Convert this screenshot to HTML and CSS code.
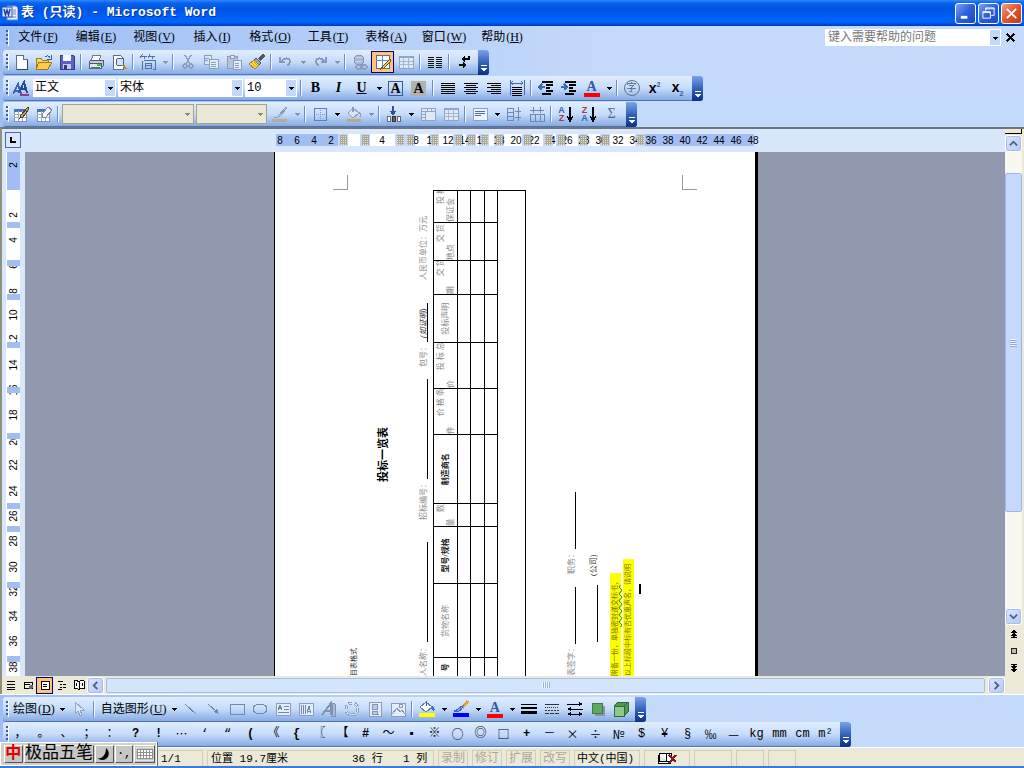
FILE: index.html
```
<!DOCTYPE html>
<html lang="zh-CN">
<head>
  <meta charset="UTF-8">
  <title>表 (只读) - Microsoft Word</title>
  <link rel="stylesheet" href="styles.css">
</head>
<body>

<!-- icon set -->
<svg class="defs" width="0" height="0" aria-hidden="true">
  <symbol id="word" viewBox="0 0 16 16"><path d="M5 1h9l2 2v12H5z" fill="#e8eefa" stroke="#6b86c4"/><path d="M11 5h3M11 7h3M11 9h3M7 12h7" stroke="#6b86c4"/><path d="M0 2h10v10H0z" fill="#dfe8fb" stroke="#2b55b0"/><path d="M2 4l1.500 6L5 5l1.500 5L8 4" fill="none" stroke="#1c46a8" stroke-width="1.500"/></symbol>
  <symbol id="down" viewBox="0 0 8 8"><path d="M2 3h5v1H2zM3 4h3v1H3zM4 5h1v1H4z" fill="currentColor"/></symbol>
  <symbol id="new" viewBox="0 0 16 16"><path d="M3 1h7l4 4v10H3z" fill="#fff" stroke="#5a6b94"/><path d="M10 1v4h4" fill="#cfdcf5" stroke="#5a6b94"/><path d="M14 6v9H4" fill="none" stroke="#2f3f6c"/></symbol>
  <symbol id="open" viewBox="0 0 16 16"><path d="M0 4h5l1 2h6v8H0z" fill="#f7d774" stroke="#a87c1c"/><path d="M3 8h13l-4 7H0z" fill="#ffc94a" stroke="#a8741a"/><path d="M9 3c2-2 4-1 5 1M15 1v4h-4" fill="none" stroke="#3d5f9e"/></symbol>
  <symbol id="save" viewBox="0 0 16 16"><path d="M1 1h13l1 1v13H1z" fill="#5a62c8" stroke="#343a8e"/><path d="M4 1h8v6H4z" fill="#f4f6ff"/><path d="M4 10h8v5H4z" fill="#c9cce8"/><path d="M5 11h3v4H5z" fill="#343a8e"/></symbol>
  <symbol id="print" viewBox="0 0 16 16"><path d="M5 1h8l-2 6H3z" fill="#fff" stroke="#6b7a90"/><path d="M1 8l2-2h12v6l-2 2H1z" fill="#c3cbd8" stroke="#4b5a70"/><path d="M1 9h12v5H1z" fill="#e2e7ee" stroke="#4b5a70"/><path d="M3 13h9v2H3z" fill="#5c6876"/><path d="M9 10h4v2H9z" fill="#3ec04c"/></symbol>
  <symbol id="preview" viewBox="0 0 16 16"><path d="M2 1h7l3 3v11H2z" fill="#fff" stroke="#5a6b94"/><circle cx="9" cy="8" r="4" fill="#cfe4fb" stroke="#50607c"/><path d="M12 11l3 4" stroke="#c09018" stroke-width="2"/></symbol>
  <symbol id="jian" viewBox="0 0 16 16"><path d="M3 0L0 4M2 2h5M4 2l1 3M10 0L8 4M9 2h6M12 2l1 3M2 7v9M4 6h11v9h-2M5 9h6v5H5zM5 11h6" fill="none" stroke="#4f70a6"/></symbol>
  <symbol id="cut" viewBox="0 0 16 16"><path d="M5 1l5 9M11 1l-5 9" stroke="#8d9cb9" stroke-width="1.500"/><circle cx="5" cy="12" r="2" fill="none" stroke="#8d9cb9" stroke-width="1.500"/><circle cx="11" cy="12" r="2" fill="none" stroke="#8d9cb9" stroke-width="1.500"/></symbol>
  <symbol id="copy" viewBox="0 0 16 16"><path d="M1 1h7v9H1z" fill="#d7e3f6" stroke="#8d9cb9"/><path d="M6 5h9v9H6z" fill="#e4edfb" stroke="#8d9cb9"/><path d="M2 4h4M2 6h3M8 8h5M8 10h5M8 12h5" stroke="#8d9cb9"/></symbol>
  <symbol id="paste" viewBox="0 0 16 16"><path d="M1 2h10v12H1z" fill="#b5c3dc" stroke="#8d9cb9"/><path d="M4 1h4v3H4z" fill="#dfe8f6" stroke="#8d9cb9"/><path d="M7 6h8v9H7z" fill="#e4edfb" stroke="#8d9cb9"/><path d="M9 9h4M9 11h4M9 13h4" stroke="#8d9cb9"/></symbol>
  <symbol id="brush" viewBox="0 0 16 16"><path d="M15 1l-5 5" stroke="#4a5568" stroke-width="3"/><path d="M7 4l5 5-2 2-5-5z" fill="#9aa6b8" stroke="#4a5568"/><path d="M5 6l5 5-4 4-6-5z" fill="#ffd94f" stroke="#a8841c"/><path d="M3 9l4 4M5 8l4 4" stroke="#d39e23"/></symbol>
  <symbol id="undo" viewBox="0 0 16 16"><path d="M2 3v5h5M3 8c2-4 8-5 9-1 0 3-2 4-3 5" fill="none" stroke="#8499c4" stroke-width="2"/></symbol>
  <symbol id="redo" viewBox="0 0 16 16"><path d="M14 3v5H9M13 8C11 4 5 3 4 7c0 3 2 4 3 5" fill="none" stroke="#8499c4" stroke-width="2"/></symbol>
  <symbol id="link" viewBox="0 0 16 16"><circle cx="7" cy="6" r="5" fill="#a9b6cf" stroke="#8796b5"/><path d="M4 4c2-2 4 1 6-1M3 7c3 1 4-1 7 1" stroke="#c9d5e8" fill="none"/><rect x="4" y="11" width="6" height="4" rx="2" fill="none" stroke="#8d9cb9" stroke-width="1.500"/><rect x="9" y="11" width="6" height="4" rx="2" fill="none" stroke="#8d9cb9" stroke-width="1.500"/></symbol>
  <symbol id="tables" viewBox="0 0 16 16"><path d="M1 1h13v13H1z" fill="#fff" stroke="#55709f"/><path d="M1 6h13M7 1v13" stroke="#6b8ac0"/><path d="M15 5l-7 7-2 3 3-1 7-7z" fill="#f3c44c" stroke="#6b5420"/><path d="M8 14h6" stroke="#3f9b3c"/></symbol>
  <symbol id="grid" viewBox="0 0 16 16"><path d="M1 2h14v12H1z" fill="#dfe8f6" stroke="#93a3c2"/><path d="M1 3h14" stroke="#93a3c2" stroke-width="2"/><path d="M1 7h14M1 10h14M5 3v11M10 3v11" stroke="#a6b5d0"/></symbol>
  <symbol id="cols" viewBox="0 0 16 16"><path d="M1 3h6M1 5h6M1 7h6M1 9h6M1 11h6M1 13h6M9 3h6M9 5h6M9 7h6M9 9h6M9 11h6M9 13h6" stroke="#111"/></symbol>
  <symbol id="turn" viewBox="0 0 16 16"><path d="M13 2v3H8M3 11h5" fill="none" stroke="#000" stroke-width="1.500"/><path d="M9 2v6L5 5zM7 8v6l4-3z"/></symbol>
  <symbol id="styles" viewBox="0 0 16 16"><path d="M0 14L5 4l3 10M2 11h5" fill="none" stroke="#3566b5" stroke-width="2"/><path d="M6 13l5-11 3 11M8 9h6" fill="none" stroke="#284a9a" stroke-width="2"/><path d="M7 15h9" stroke="#8a3d96" stroke-width="2"/></symbol>
  <symbol id="just" viewBox="0 0 16 16"><path d="M1 3h14M1 5h14M1 7h14M1 9h14M1 11h14M1 13h14" stroke="#000"/></symbol>
  <symbol id="center" viewBox="0 0 16 16"><path d="M1 3h14M3 5h10M1 7h14M3 9h10M1 11h14M3 13h10" stroke="#000"/></symbol>
  <symbol id="right" viewBox="0 0 16 16"><path d="M1 3h14M5 5h10M1 7h14M5 9h10M1 11h14M5 13h10" stroke="#000"/></symbol>
  <symbol id="dist" viewBox="0 0 16 16"><path d="M1 0v15M15 0v15" stroke="#3f68b8"/><path d="M2 3h12M4 1L2 3l2 2M12 1l2 2-2 2" stroke="#3f68b8" fill="none"/><path d="M3 7h10M3 9h10M3 11h10M3 13h10M3 15h10" stroke="#000"/></symbol>
  <symbol id="outdent" viewBox="0 0 16 16"><path d="M4 2h11M8 5h7M8 8h4M8 11h7M4 14h9" stroke="#000" stroke-width="1.500"/><path d="M7 7H1M4 4L1 7l3 3" stroke="#3f68b8" fill="none" stroke-width="1.500"/></symbol>
  <symbol id="indent" viewBox="0 0 16 16"><path d="M4 2h11M8 5h7M8 8h4M8 11h7M4 14h9" stroke="#000" stroke-width="1.500"/><path d="M0 7h6M3 4l3 3-3 3" stroke="#3f68b8" fill="none" stroke-width="1.500"/></symbol>
  <symbol id="drawtbl" viewBox="0 0 16 16"><path d="M1 3h12v12H1z" fill="#fff" stroke="#7c90b8"/><path d="M1 4h12" stroke="#4b71bb" stroke-width="3"/><path d="M1 8h12M1 11h12M5 5v10M9 5v10" stroke="#9fb0d0"/><path d="M15 1l-7 8-1 3 3-1 6-8z" fill="#c9a35a" stroke="#4c3b1c"/></symbol>
  <symbol id="erasetbl" viewBox="0 0 16 16"><path d="M1 3h12v12H1z" fill="#fff" stroke="#7c90b8"/><path d="M1 4h12" stroke="#4b71bb" stroke-width="3"/><path d="M1 8h12M1 11h12M5 5v10M9 5v10" stroke="#9fb0d0"/><path d="M12 1l4 3-6 7H6V8z" fill="#f4f6fa" stroke="#78859c"/></symbol>
  <symbol id="penline" viewBox="0 0 16 16"><path d="M14 1L7 9l-1 2 2-1 7-8z" fill="#c8d3e6" stroke="#8d9cb9"/><path d="M2 11h4" stroke="#8d9cb9"/><path d="M0 14h15" stroke="#b5ac9c" stroke-width="3"/></symbol>
  <symbol id="border" viewBox="0 0 16 16"><path d="M2 2h12v12H2z" fill="none" stroke="#5c7fc0"/><path d="M4 8h9M8 4v9" stroke="#7c9bd2" stroke-dasharray="1 1"/></symbol>
  <symbol id="fill0" viewBox="0 0 16 16"><path d="M7 2l6 5-6 5-5-5z" fill="#dbe4f2" stroke="#8d9cb9"/><path d="M7 6V1M13 7c2 1 2 3 1 4" stroke="#8d9cb9" fill="none" stroke-width="1.500"/><path d="M1 14h14" stroke="#b5ac8c" stroke-width="3"/></symbol>
  <symbol id="instbl" viewBox="0 0 16 16"><path d="M7 0v8M5 5l2 3 2-3" fill="none" stroke="#2f5199" stroke-width="2"/><path d="M1 10h3v5H1z" fill="#fff" stroke="#667"/><path d="M6 10h3v5H6z" fill="#666" stroke="#333"/><path d="M11 10h3v5h-3z" fill="#fff" stroke="#667"/></symbol>
  <symbol id="merge" viewBox="0 0 16 16"><path d="M1 2h14v12H1z" fill="#dfe8f6" stroke="#93a3c2"/><path d="M1 5h14M5 5v9M1 8h4M1 11h4M11 2v3M7 2v3" stroke="#93a3c2"/></symbol>
  <symbol id="aligntop" viewBox="0 0 16 16"><path d="M1 2h14v12H1z" fill="#edf3fc" stroke="#8fa3c8"/><path d="M3 5h10M3 7h10M3 9h6" stroke="#56698f"/></symbol>
  <symbol id="rowsame" viewBox="0 0 16 16"><path d="M1 2h6v12H1zM1 6h6M1 10h6M9 5h6M9 11h6M12 1v14" fill="none" stroke="#6d86b8"/></symbol>
  <symbol id="colsame" viewBox="0 0 16 16"><path d="M1 8h14v7H1zM6 8v7M11 8v7M1 4h14M4 1v6M11 1v6" fill="none" stroke="#6d86b8"/></symbol>
  <symbol id="arrowdn" viewBox="0 0 6 16"><path d="M3 1v13M0 10l3 5 3-5" fill="none" stroke="#000" stroke-width="1.500"/></symbol>
  <symbol id="cursor" viewBox="0 0 16 16"><path d="M4 1v12l3-3 2 5 2-1-2-5h4z" fill="#dbe6f7" stroke="#93a3c2"/></symbol>
  <symbol id="line" viewBox="0 0 16 16"><path d="M2 3l11 10" stroke="#7088b4"/></symbol>
  <symbol id="arrow" viewBox="0 0 16 16"><path d="M2 3l9 8" stroke="#7088b4"/><path d="M13 13L7 11l4-4z" fill="#7088b4"/></symbol>
  <symbol id="rect" viewBox="0 0 16 16"><path d="M1 3h14v10H1z" fill="none" stroke="#7088b4"/></symbol>
  <symbol id="oval" viewBox="0 0 16 16"><ellipse cx="8" cy="8" rx="7" ry="5" fill="none" stroke="#7088b4"/></symbol>
  <symbol id="textbox" viewBox="0 0 16 16"><path d="M1 2h14v12H1z" fill="#e3ecf9" stroke="#8d9cb9"/><path d="M3 9l2-5 2 5M4 7h3M9 5h5M9 8h5M3 11h11" stroke="#7688aa" fill="none"/></symbol>
  <symbol id="vtextbox" viewBox="0 0 16 16"><path d="M1 2h14v12H1z" fill="#e3ecf9" stroke="#8d9cb9"/><path d="M3 4v9M5 4v9M7 4v9M9 12l2-7 2 7M10 10h3" stroke="#7688aa" fill="none"/></symbol>
  <symbol id="wordart" viewBox="0 0 16 16"><path d="M1 14L10 2v12M4 10h6" fill="none" stroke="#7f92b8" stroke-width="2"/><path d="M12 2l2 1v12h-3z" fill="#a9b8d3" stroke="#7f92b8"/></symbol>
  <symbol id="diagram" viewBox="0 0 16 16"><circle cx="8" cy="8" r="6" fill="none" stroke="#8d9cb9" stroke-width="3" stroke-dasharray="4 2"/><circle cx="8" cy="8" r="6" fill="none" stroke="#dbe6f7" stroke-dasharray="4 2"/></symbol>
  <symbol id="clipart" viewBox="0 0 16 16"><path d="M2 1h12v14H2z" fill="#e3ecf9" stroke="#8d9cb9"/><circle cx="8" cy="6" r="3" fill="#bccae2" stroke="#8193b5"/><path d="M5 13c0-4 6-4 6 0z" fill="#bccae2" stroke="#8193b5"/></symbol>
  <symbol id="picture" viewBox="0 0 16 16"><path d="M1 2h14v13H1z" fill="#e3ecf9" stroke="#8d9cb9"/><circle cx="11" cy="5" r="2" fill="none" stroke="#8d9cb9"/><path d="M2 13l5-6 3 4 2-2 3 4" fill="none" stroke="#8193b5"/></symbol>
  <symbol id="fill" viewBox="0 0 18 18"><path d="M8 2l6 5-6 5-6-5z" fill="#fff" stroke="#5a7db8"/><path d="M8 6V1" stroke="#4a5f88" fill="none"/><path d="M14 6c3 1 3 4 2 6-1-2-2-3-4-3z" fill="#3d6cc0"/><path d="M1 15h16" stroke="#ff0" stroke-width="4"/></symbol>
  <symbol id="linecolor" viewBox="0 0 18 18"><path d="M16 1l-6 7" stroke="#e0a040" stroke-width="3"/><path d="M11 6c-1 5-5 6-9 5 4 0 4-4 9-5z" fill="#7da3de" stroke="#3a66b0"/><path d="M1 15h16" stroke="#00f" stroke-width="4"/></symbol>
  <symbol id="lstyle" viewBox="0 0 16 16"><path d="M0 3h16v1H0zM0 6h16v2H0zM0 10h16v3H0z" fill="#000"/></symbol>
  <symbol id="dash" viewBox="0 0 16 16"><path d="M1 3h14" stroke="#333"/><path d="M1 6h14" stroke="#333" stroke-dasharray="1 1"/><path d="M1 9h14" stroke="#333" stroke-dasharray="2 1"/><path d="M1 12h14" stroke="#333" stroke-dasharray="4 1"/></symbol>
  <symbol id="astyle" viewBox="0 0 16 16"><path d="M0 3h14M2 8h14M1 13h14" stroke="#000"/><path d="M12 1l4 2-4 2zM4 6L0 8l4 2zM12 11l4 2-4 2zM4 11l-4 2 4 2z"/></symbol>
  <symbol id="shadow" viewBox="0 0 16 16"><path d="M5 5h10v10H5z" fill="#8a93a0"/><path d="M2 2h10v10H2z" fill="#5fa860" stroke="#3c7c42"/></symbol>
  <symbol id="cube" viewBox="0 0 16 16"><path d="M1 5l4-4h10v10l-4 4H1z" fill="#4f9a52" stroke="#2f6a38"/><path d="M1 5h10v10H1z" fill="#8fc98a" stroke="#2f6a38"/><path d="M11 5l4-4" stroke="#2f6a38"/></symbol>
  <symbol id="v-normal" viewBox="0 0 12 12"><path d="M2 2h8M2 5h8M2 8h8M2 10h8" stroke="#000"/></symbol>
  <symbol id="v-web" viewBox="0 0 12 12"><path d="M2 3h8v6H2zM2 5h6" fill="none" stroke="#000"/><circle cx="9" cy="8" r="2" fill="#667"/></symbol>
  <symbol id="v-print" viewBox="0 0 12 12"><path d="M2 2h8v8H2z" fill="#fff" stroke="#000"/><path d="M4 5h4M4 7h4" stroke="#000"/></symbol>
  <symbol id="v-outline" viewBox="0 0 12 12"><path d="M2 2h5M4 5h2M7 5h3M4 8h2M7 8h3M2 10h4" stroke="#000"/></symbol>
  <symbol id="v-read" viewBox="0 0 12 12"><path d="M1 2c2-1 4 0 5 1 1-1 3-2 5-1v7H8l-2 2-2-2H1zM6 3v7M3 4v3M9 4v3" fill="#fff" stroke="#000"/></symbol>
  <symbol id="chev" viewBox="0 0 10 10"><path d="M1 7l4-4 4 4" fill="none" stroke="#4d6185" stroke-width="2"/></symbol>
  <symbol id="dblup" viewBox="0 0 8 8"><path d="M3 0h2v1h1v1h1v1H5v1h1v1h1v1H5v1h2v1H1V7h2V6H1V5h1V4h1V3H1V2h1V1h1z"/></symbol>
  <symbol id="more" viewBox="0 0 8 8"><path d="M1 1h6v1H1zM1 4h6v1H1zM2 5h4v1H2zM3 6h2v1H3z" fill="#fff"/></symbol>
  <symbol id="book" viewBox="0 0 20 14"><path d="M2 2h5l2 1 2-1h3v8H10l-1 1-1-1H2zM9 3v8M1 4v8h13" fill="#fff" stroke="#000"/><path d="M12 4l7 7M19 4l-7 8" stroke="#8b1414" stroke-width="2"/></symbol>
</svg>

<div class="window">

  <header class="titlebar">
    <svg class="app-icon"><use href="#word"/></svg>
    <h1>表 (只读) - Microsoft Word</h1>
    <button class="winbtn" aria-label="最小化"><svg viewBox="0 0 16 16"><path d="M3 12h7" stroke="#fff" stroke-width="3"/></svg></button>
    <button class="winbtn" aria-label="还原"><svg viewBox="0 0 16 16"><path d="M5 5V2h9v8h-3M5 3h9" fill="none" stroke="#fff"/><path d="M2 6h8v7H2zM2 7h8" fill="none" stroke="#fff"/></svg></button>
    <button class="winbtn close" aria-label="关闭"><svg viewBox="0 0 16 16"><path d="M3 3l10 10M13 3L3 13" stroke="#fff" stroke-width="2"/></svg></button>
  </header>

  <div class="dock">
    <nav class="menubar">
      <span class="grip"></span>
      <button>文件<small>(<u>F</u>)</small></button>
      <button>编辑<small>(<u>E</u>)</small></button>
      <button>视图<small>(<u>V</u>)</small></button>
      <button>插入<small>(<u>I</u>)</small></button>
      <button>格式<small>(<u>O</u>)</small></button>
      <button>工具<small>(<u>T</u>)</small></button>
      <button>表格<small>(<u>A</u>)</small></button>
      <button>窗口<small>(<u>W</u>)</small></button>
      <button>帮助<small>(<u>H</u>)</small></button>
      <span class="ask">
        <input type="text" aria-label="帮助" placeholder="键入需要帮助的问题">
        <button class="drop" aria-label="展开"><svg><use href="#down"/></svg></button>
      </span>
      <button class="doc-close" aria-label="关闭文档"><svg viewBox="0 0 10 10"><path d="M1 1l8 8M9 1L1 9" stroke="#000" stroke-width="2"/></svg></button>
    </nav>

    <!-- 常用 -->
    <div class="toolbar">
      <span class="grip"></span>
      <button class="tb" aria-label="新建"><svg><use href="#new"/></svg></button>
      <button class="tb" aria-label="打开"><svg><use href="#open"/></svg></button>
      <button class="tb" aria-label="保存"><svg><use href="#save"/></svg></button>
      <span class="sep"></span>
      <button class="tb" aria-label="打印"><svg><use href="#print"/></svg></button>
      <button class="tb" aria-label="打印预览"><svg><use href="#preview"/></svg></button>
      <span class="sep"></span>
      <button class="tb" aria-label="简繁转换"><svg><use href="#jian"/></svg></button>
      <button class="arr dim" aria-label="更多"><svg><use href="#down"/></svg></button>
      <span class="sep"></span>
      <button class="tb" aria-label="剪切"><svg><use href="#cut"/></svg></button>
      <button class="tb" aria-label="复制"><svg><use href="#copy"/></svg></button>
      <button class="tb" aria-label="粘贴"><svg><use href="#paste"/></svg></button>
      <button class="tb" aria-label="格式刷"><svg><use href="#brush"/></svg></button>
      <span class="sep"></span>
      <button class="tb" aria-label="撤消"><svg><use href="#undo"/></svg></button>
      <button class="arr dim" aria-label="撤消列表"><svg><use href="#down"/></svg></button>
      <button class="tb" aria-label="恢复"><svg><use href="#redo"/></svg></button>
      <button class="arr dim" aria-label="恢复列表"><svg><use href="#down"/></svg></button>
      <span class="sep"></span>
      <button class="tb" aria-label="超链接"><svg><use href="#link"/></svg></button>
      <button class="tb on" aria-label="表格和边框"><svg><use href="#tables"/></svg></button>
      <button class="tb" aria-label="插入表格"><svg><use href="#grid"/></svg></button>
      <span class="sep"></span>
      <button class="tb" aria-label="分栏"><svg><use href="#cols"/></svg></button>
      <span class="sep"></span>
      <button class="tb" aria-label="更改文字方向"><svg><use href="#turn"/></svg></button>
      <button class="cap" aria-label="工具栏选项"><svg><use href="#more"/></svg></button>
    </div>

    <!-- 格式 -->
    <div class="toolbar">
      <span class="grip"></span>
      <button class="tb" aria-label="样式和格式"><svg><use href="#styles"/></svg></button>
      <span class="combo w-style"><select aria-label="样式"><option>正文</option></select><span class="drop"><svg><use href="#down"/></svg></span></span>
      <span class="combo w-font"><select aria-label="字体"><option>宋体</option></select><span class="drop"><svg><use href="#down"/></svg></span></span>
      <span class="combo w-size"><select aria-label="字号"><option>10</option></select><span class="drop"><svg><use href="#down"/></svg></span></span>
      <span class="sep"></span>
      <button class="tb glyph"><b>B</b></button>
      <button class="tb glyph"><i>I</i></button>
      <button class="tb glyph"><u>U</u></button>
      <button class="arr" aria-label="下划线"><svg><use href="#down"/></svg></button>
      <button class="tb glyph"><span class="boxed">A</span></button>
      <button class="tb glyph"><span class="shaded">A</span></button>
      <span class="sep"></span>
      <button class="tb" aria-label="两端对齐"><svg><use href="#just"/></svg></button>
      <button class="tb" aria-label="居中"><svg><use href="#center"/></svg></button>
      <button class="tb" aria-label="右对齐"><svg><use href="#right"/></svg></button>
      <button class="tb" aria-label="分散对齐"><svg><use href="#dist"/></svg></button>
      <span class="sep"></span>
      <button class="tb" aria-label="减少缩进量"><svg><use href="#outdent"/></svg></button>
      <button class="tb" aria-label="增加缩进量"><svg><use href="#indent"/></svg></button>
      <button class="tb glyph"><span class="fontcolor">A</span></button>
      <button class="arr" aria-label="字体颜色"><svg><use href="#down"/></svg></button>
      <span class="sep"></span>
      <button class="tb glyph"><span class="circled">字</span></button>
      <button class="tb glyph script"><span>x<sup>2</sup></span></button>
      <button class="tb glyph script"><span>x<sub>2</sub></span></button>
      <button class="cap" aria-label="工具栏选项"><svg><use href="#more"/></svg></button>
    </div>

    <!-- 表格和边框 -->
    <div class="toolbar">
      <span class="grip"></span>
      <button class="tb" aria-label="绘制表格"><svg><use href="#drawtbl"/></svg></button>
      <button class="tb" aria-label="擦除"><svg><use href="#erasetbl"/></svg></button>
      <span class="sep"></span>
      <span class="combo off w-line"><select aria-label="线型" disabled><option></option></select><span class="drop"><svg><use href="#down"/></svg></span></span>
      <span class="combo off w-weight"><select aria-label="粗细" disabled><option></option></select><span class="drop"><svg><use href="#down"/></svg></span></span>
      <button class="tb" aria-label="边框颜色"><svg><use href="#penline"/></svg></button>
      <button class="arr dim" aria-label="更多"><svg><use href="#down"/></svg></button>
      <span class="sep"></span>
      <button class="tb" aria-label="外侧框线"><svg><use href="#border"/></svg></button>
      <button class="arr" aria-label="更多"><svg><use href="#down"/></svg></button>
      <button class="tb" aria-label="底纹颜色"><svg><use href="#fill0"/></svg></button>
      <button class="arr dim" aria-label="更多"><svg><use href="#down"/></svg></button>
      <span class="sep"></span>
      <button class="tb" aria-label="插入表格"><svg><use href="#instbl"/></svg></button>
      <button class="arr" aria-label="更多"><svg><use href="#down"/></svg></button>
      <button class="tb" aria-label="合并单元格"><svg><use href="#merge"/></svg></button>
      <button class="tb" aria-label="拆分单元格"><svg><use href="#grid"/></svg></button>
      <span class="sep"></span>
      <button class="tb" aria-label="对齐方式"><svg><use href="#aligntop"/></svg></button>
      <button class="arr" aria-label="更多"><svg><use href="#down"/></svg></button>
      <button class="tb" aria-label="平均分布各行"><svg><use href="#rowsame"/></svg></button>
      <button class="tb" aria-label="平均分布各列"><svg><use href="#colsame"/></svg></button>
      <span class="sep"></span>
      <button class="tb sort"><span><b class="blue">A</b><b class="red">Z</b></span><svg><use href="#arrowdn"/></svg></button>
      <button class="tb sort"><span><b class="red">Z</b><b class="blue">A</b></span><svg><use href="#arrowdn"/></svg></button>
      <button class="tb glyph sum">Σ</button>
      <button class="cap" aria-label="工具栏选项"><svg><use href="#more"/></svg></button>
    </div>
  </div>

  <main class="work">
    <div class="work-main">
      <div class="ruler-row">
        <div class="corner"><button aria-label="制表符"><svg viewBox="0 0 8 8"><path d="M2 1v5h5" fill="none" stroke="#000" stroke-width="2"/></svg></button></div>
        <div class="ruler-h">
          <svg width="484" height="23">
            <defs><pattern id="dots" width="2" height="2" patternUnits="userSpaceOnUse"><rect width="2" height="2" fill="#e4e1d2"/><path d="M0 0h1v2H0zM0 0h2v1H0z" fill="#a9a796"/></pattern></defs>
            <path d="M2 5h68v12H2zM366 5h114v12H366z" fill="#a2bdf4"/>
            <path d="M70 5h296v12H70z" fill="#fff"/>
            <path d="M64 5h10v12H64zM86 5h10v12H86zM121 5h10v12h-10zM131 5h10v12h-10zM155 5h10v12h-10zM179 5h10v12h-10zM192 5h10v12h-10zM205 5h10v12h-10zM220 5h10v12h-10zM248 5h10v12h-10zM269 5h10v12h-10zM282 5h10v12h-10zM304 5h10v12h-10zM326 5h10v12h-10zM361 5h10v12h-10z" fill="#c5d8fa"/>
            <g class="tick">
              <text x="6" y="15">8</text><text x="23" y="15">6</text><text x="40" y="15">4</text><text x="57" y="15">2</text>
              <text x="108" y="15">4</text><text x="142" y="15">8</text><text x="158" y="15">10</text><text x="174" y="15">12</text>
              <text x="191" y="15">14</text><text x="208" y="15">16</text><text x="225" y="15">18</text><text x="242" y="15">20</text>
              <text x="260" y="15">22</text><text x="276" y="15">24</text><text x="293" y="15">26</text><text x="310" y="15">28</text>
              <text x="327" y="15">30</text><text x="344" y="15">32</text><text x="361" y="15">34</text><text x="377" y="15">36</text>
              <text x="394" y="15">38</text><text x="411" y="15">40</text><text x="428" y="15">42</text><text x="445" y="15">44</text>
              <text x="462" y="15">46</text><text x="479" y="15">48</text>
            </g>
            <path d="M66 6h7v10H66zM88 6h7v10H88zM123 6h7v10h-7zM133 6h7v10h-7zM157 6h7v10h-7zM181 6h7v10h-7zM194 6h7v10h-7zM207 6h7v10h-7zM222 6h7v10h-7zM250 6h7v10h-7zM271 6h7v10h-7zM284 6h7v10h-7zM306 6h7v10h-7zM328 6h7v10h-7zM363 6h7v10h-7z" fill="url(#dots)"/>
          </svg>
        </div>
      </div>

      <div class="view">
        <div class="ruler-v">
          <svg width="23" height="524">
            <path d="M4 0h14v524H4z" fill="#fff"/>
            <path d="M5 0h13v38H5z" fill="#a2bdf4"/>
            <g class="tick v">
              <text transform="translate(15 13) rotate(-90)">2</text>
              <text transform="translate(15 63) rotate(-90)">2</text>
              <text transform="translate(15 88) rotate(-90)">4</text>
              <text transform="translate(15 114) rotate(-90)">6</text>
              <text transform="translate(15 139) rotate(-90)">8</text>
              <text transform="translate(15 163) rotate(-90)">10</text>
              <text transform="translate(15 188) rotate(-90)">12</text>
              <text transform="translate(15 213) rotate(-90)">14</text>
              <text transform="translate(15 238) rotate(-90)">16</text>
              <text transform="translate(15 263) rotate(-90)">18</text>
              <text transform="translate(15 288) rotate(-90)">20</text>
              <text transform="translate(15 313) rotate(-90)">22</text>
              <text transform="translate(15 339) rotate(-90)">24</text>
              <text transform="translate(15 364) rotate(-90)">26</text>
              <text transform="translate(15 389) rotate(-90)">28</text>
              <text transform="translate(15 415) rotate(-90)">30</text>
              <text transform="translate(15 439) rotate(-90)">32</text>
              <text transform="translate(15 464) rotate(-90)">34</text>
              <text transform="translate(15 489) rotate(-90)">36</text>
              <text transform="translate(15 515) rotate(-90)">38</text>
            </g>
            <path d="M5 70h13v6H5zM5 108h13v6H5zM5 142h13v6H5zM5 190h13v6H5zM5 235h13v6H5zM5 281h13v6H5zM5 351h13v6H5zM5 374h13v6H5zM5 430h13v6H5zM5 504h13v6H5z" fill="#a2bdf4"/>
          </svg>
        </div>
        <div class="canvas">
          <div class="page">
            <span class="crop crop-l"></span>
            <span class="crop crop-r"></span>
            <!-- landscape section, turned a quarter to the left -->
            <article class="sheet">
              <p class="note">目表格式</p>
              <h2>投标一览表</h2>
              <p class="fields">
                <span class="f-name">人名称：</span><span class="blank long"></span>
                <span class="f-no">招标编号：</span><span class="blank long"></span>
                <span class="f-pack">包号：</span><span class="blank proof"><i>(如证明)</i></span>
                <span class="f-unit">人民币单位：万元</span>
              </p>
              <table class="bid">
                <colgroup><col class="c18"><col class="c74"><col class="c57"><col class="c23"><col class="c69"><col class="c46"><col class="c46"><col class="c48"><col class="c34"><col class="c38"><col class="c32"></colgroup>
                <tr class="head">
                  <th>号</th>
                  <td class="mid">货物名称</td>
                  <th>型号/规格</th>
                  <td><p class="end">数</p><p>量</p></td>
                  <th>制造商名</th>
                  <td><p class="in">价 格 条</p><p>件</p></td>
                  <td><p class="in">投 标 总</p><p>价</p></td>
                  <td class="mid">投标声明</td>
                  <td><p class="in">交 货</p><p>期</p></td>
                  <td><p class="in">交 货</p><p>地点</p></td>
                  <td><p class="in">投 标</p><p>保证金</p></td>
                </tr>
                <tr class="r13"><td></td><td></td><td></td><td></td><td></td><td></td><td></td><td></td><td></td><td></td><td></td></tr>
                <tr class="r14"><td></td><td></td><td></td><td></td><td></td><td></td><td></td><td></td><td></td><td></td><td></td></tr>
                <tr class="r13"><td></td><td></td><td></td><td></td><td></td><td></td><td></td><td></td><td></td><td></td><td></td></tr>
                <tr class="r28"><td colspan="11"></td></tr>
              </table>
              <p class="fields sign"><span class="f-sign">表签字：</span><span class="blank short"></span><span class="f-post">职务：</span><span class="blank short"></span></p>
              <p class="fields seal"><span class="blank short"></span><span class="dark">(公司)</span></p>
              <p class="mark"><mark>附备一份，单独<span class="wavy">密封递交标书</span>，</mark></p>
              <p class="mark"><mark>以上标段中标有否优惠声名，请说明</mark></p>
              <span class="caret"></span>
            </article>
          </div>
        </div>
      </div>

      <div class="hbar">
        <button class="vw" aria-label="普通视图"><svg><use href="#v-normal"/></svg></button>
        <button class="vw" aria-label="Web 版式"><svg><use href="#v-web"/></svg></button>
        <button class="vw on" aria-label="页面视图"><svg><use href="#v-print"/></svg></button>
        <button class="vw" aria-label="大纲视图"><svg><use href="#v-outline"/></svg></button>
        <button class="vw" aria-label="阅读版式"><svg><use href="#v-read"/></svg></button>
        <button class="sb" aria-label="向左滚动"><svg class="left"><use href="#chev"/></svg></button>
        <div class="thumb-h"><span></span></div>
        <button class="sb" aria-label="向右滚动"><svg class="rt"><use href="#chev"/></svg></button>
      </div>
    </div>

    <div class="vbar">
      <span class="split"></span>
      <button class="sb" aria-label="向上滚动"><svg><use href="#chev"/></svg></button>
      <div class="track"><div class="thumb-v"><span></span></div></div>
      <button class="sb" aria-label="向下滚动"><svg class="dn"><use href="#chev"/></svg></button>
      <button class="browse" aria-label="前一页"><svg><use href="#dblup"/></svg></button>
      <button class="browse" aria-label="选择浏览对象"><svg viewBox="0 0 8 8"><circle cx="4" cy="4" r="3" fill="#bbb" stroke="#222"/></svg></button>
      <button class="browse" aria-label="下一页"><svg class="dn"><use href="#dblup"/></svg></button>
    </div>
  </main>

  <div class="dock bottom">
    <!-- 绘图 -->
    <div class="toolbar">
      <span class="grip"></span>
      <button class="txt">绘图<small>(<u>D</u>)</small></button>
      <span class="arr"><svg><use href="#down"/></svg></span>
      <button class="tb" aria-label="选择对象"><svg><use href="#cursor"/></svg></button>
      <span class="sep"></span>
      <button class="txt">自选图形<small>(<u>U</u>)</small></button>
      <span class="arr"><svg><use href="#down"/></svg></span>
      <button class="tb" aria-label="直线"><svg><use href="#line"/></svg></button>
      <button class="tb" aria-label="箭头"><svg><use href="#arrow"/></svg></button>
      <button class="tb" aria-label="矩形"><svg><use href="#rect"/></svg></button>
      <button class="tb" aria-label="椭圆"><svg><use href="#oval"/></svg></button>
      <button class="tb" aria-label="文本框"><svg><use href="#textbox"/></svg></button>
      <button class="tb" aria-label="竖排文本框"><svg><use href="#vtextbox"/></svg></button>
      <button class="tb" aria-label="艺术字"><svg><use href="#wordart"/></svg></button>
      <button class="tb" aria-label="图示"><svg><use href="#diagram"/></svg></button>
      <button class="tb" aria-label="剪贴画"><svg><use href="#clipart"/></svg></button>
      <button class="tb" aria-label="图片"><svg><use href="#picture"/></svg></button>
      <span class="sep"></span>
      <button class="tb big" aria-label="填充颜色"><svg><use href="#fill"/></svg></button>
      <button class="arr" aria-label="更多"><svg><use href="#down"/></svg></button>
      <button class="tb big" aria-label="线条颜色"><svg><use href="#linecolor"/></svg></button>
      <button class="arr" aria-label="更多"><svg><use href="#down"/></svg></button>
      <button class="tb glyph"><span class="fontcolor">A</span></button>
      <button class="arr" aria-label="更多"><svg><use href="#down"/></svg></button>
      <button class="tb" aria-label="线型"><svg><use href="#lstyle"/></svg></button>
      <button class="tb" aria-label="虚线线型"><svg><use href="#dash"/></svg></button>
      <button class="tb" aria-label="箭头样式"><svg><use href="#astyle"/></svg></button>
      <button class="tb" aria-label="阴影样式"><svg><use href="#shadow"/></svg></button>
      <button class="tb" aria-label="三维效果样式"><svg><use href="#cube"/></svg></button>
      <button class="cap" aria-label="工具栏选项"><svg><use href="#more"/></svg></button>
    </div>

    <!-- 符号栏 -->
    <div class="toolbar symbols">
      <span class="grip"></span>
      <button class="tb">，</button><button class="tb">。</button><button class="tb">、</button><button class="tb">；</button><button class="tb">：</button><button class="tb"><b>?</b></button><button class="tb"><b>!</b></button><button class="tb cjk">…</button><button class="tb">‘</button><button class="tb">“</button><button class="tb"><b>(</b></button><button class="tb">《</button><button class="tb"><b>{</b></button><button class="tb">〖</button><button class="tb">【</button><button class="tb"><b>#</b></button><button class="tb">～</button><button class="tb">▪</button><button class="tb">※</button><button class="tb cjk">○</button><button class="tb">◎</button><button class="tb cjk">□</button><button class="tb"><b>+</b></button><button class="tb">－</button><button class="tb cjk">×</button><button class="tb cjk">÷</button><button class="tb cjk">№</button><button class="tb">$</button><button class="tb">¥</button><button class="tb">§</button><button class="tb cjk">‰</button><button class="tb cjk">—</button><button class="tb">kg</button><button class="tb">mm</button><button class="tb">cm</button><button class="tb">m²</button>
      <button class="cap" aria-label="工具栏选项"><svg><use href="#more"/></svg></button>
    </div>
  </div>

  <footer class="status">
    <div class="cell s-page">1/1</div>
    <div class="cell s-pos"><span class="at">位置 19.7厘米</span><span class="ln">36 行</span><span>1 列</span></div>
    <div class="cell mode">录制</div>
    <div class="cell mode">修订</div>
    <div class="cell mode">扩展</div>
    <div class="cell mode">改写</div>
    <div class="cell s-lang">中文(中国)</div>
    <div class="cell s-book"><svg><use href="#book"/></svg></div>
    <div class="cell s-a"></div>
    <div class="cell s-b"></div>
    <div class="cell s-b"></div>
  </footer>

  <div class="ime">
    <button class="ime-zh">中</button>
    <button class="ime-name">极品五笔</button>
    <button aria-label="半角"><svg viewBox="0 0 14 14"><path d="M9 1c5 4 3 12-4 12-2 0-3-1-4-2 5 1 8-4 8-10z"/></svg></button>
    <button>·,</button>
    <button class="ime-keys" aria-label="软键盘"><svg viewBox="0 0 18 14"><path d="M0 1h18v12H0z" fill="#8f8f8f" stroke="#fff"/><path d="M2 4h14M2 7h14M2 10h14" stroke="#fff" stroke-width="2" stroke-dasharray="2 1"/></svg></button>
  </div>
</div>

</body>
</html>
```

FILE: styles.css
```
* {
  box-sizing: border-box;
}

body {
  margin: 0;
  font-family: "Liberation Mono", "Noto Sans CJK SC", monospace;
  font-size: 12px;
  line-height: 16px;
  color: #000;
}

button,
input,
select {
  margin: 0;
  padding: 0;
  border: 0;
  background: none;
  color: inherit;
  font: inherit;
}

p,
h1,
h2 {
  margin: 0;
}

svg {
  display: block;
}

.defs {
  position: absolute;
}

.window {
  position: relative;
  display: flex;
  flex-direction: column;
  height: 100vh;
  overflow: hidden;
  border-bottom: 2px solid #3a7bd6;
  background: #ece9d8;
}

/* title bar */
.titlebar {
  display: flex;
  flex: none;
  align-items: center;
  gap: 2px;
  height: 26px;
  padding: 0 2px;
  background: linear-gradient(#2f8cff 0, #0a62ee 3px, #0054e3 9px, #0060fa 18px, #0066ff 22px, #0038b8 26px);
}

.app-icon {
  width: 16px;
  height: 16px;
}

.titlebar h1 {
  flex: 1;
  padding-left: 1px;
  color: #fff;
  font-size: 13px;
  line-height: 20px;
  text-shadow: 1px 1px #0a2f8c;
  white-space: pre;
}

.winbtn {
  width: 21px;
  height: 21px;
  padding: 2px;
  border: 1px solid #fff;
  border-radius: 3px;
  background: linear-gradient(135deg, #7ba2f0, #2a5fdb 50%, #1c48c8);
}

.winbtn.close {
  background: linear-gradient(135deg, #f0a085, #e2532c 50%, #c23a14);
}

/* docked bars */
.dock {
  display: flex;
  flex: none;
  flex-direction: column;
  align-items: flex-start;
  gap: 2px;
  padding-bottom: 1px;
  background: linear-gradient(90deg, #9ebef5, #c4dafa 60%);
}

.dock svg {
  shape-rendering: crispEdges;
}

.dock.bottom {
  gap: 1px;
  padding: 2px 0 1px;
  border-top: 1px solid #fff;
}

small {
  padding-left: 1px;
  font-family: "Liberation Serif", serif;
  font-size: 12px;
}

.menubar {
  display: flex;
  align-items: center;
  width: 100%;
  height: 22px;
  padding: 1px 5px 0 3px;
}

.menubar > button {
  width: 58px;
  white-space: nowrap;
}

.grip {
  flex: none;
  width: 3px;
  height: 16px;
  margin: 0 0 0 3px;
  background: repeating-linear-gradient(#3c5da0 0, #3c5da0 2px, transparent 2px, transparent 4px);
  border-right: 1px solid #fff;
}

.ask {
  display: flex;
  width: 176px;
  height: 17px;
  margin-left: auto;
  background: #fff;
}

.ask input {
  flex: 1;
  min-width: 0;
  padding-left: 3px;
  color: #777;
}

.ask input::placeholder {
  color: #777;
}

.drop {
  display: flex;
  flex: none;
  align-items: center;
  justify-content: center;
  width: 12px;
  border: 1px solid #fff;
  background: #c3d8f9;
}

.drop svg,
.arr svg {
  width: 8px;
  height: 8px;
}

.menubar > .doc-close {
  display: flex;
  justify-content: center;
  width: 18px;
}

.doc-close svg {
  width: 9px;
  height: 9px;
}

.toolbar {
  display: flex;
  align-items: center;
  height: 24px;
  margin-left: 3px;
  border-radius: 3px;
  background: linear-gradient(#e0edfe, #c6dcfa 50%, #86abe4);
  box-shadow: 0 1px #4e74b4;
}

.tb {
  display: flex;
  flex: none;
  align-items: center;
  justify-content: center;
  width: 23px;
  height: 22px;
  white-space: nowrap;
}

.tb svg {
  width: 16px;
  height: 16px;
}

.tb.big svg {
  width: 18px;
  height: 18px;
}

.tb.on {
  border: 1px solid #000080;
  background: #ffc37c;
}

.arr {
  display: flex;
  flex: none;
  align-items: center;
  justify-content: center;
  width: 11px;
  height: 22px;
}

.dim {
  color: #8192b0;
}

.sep {
  flex: none;
  width: 2px;
  height: 16px;
  margin: 0 2px;
  border-left: 1px solid #6a8ccb;
  border-right: 1px solid #f1f9ff;
}

.cap {
  display: flex;
  flex: none;
  align-items: flex-end;
  justify-content: center;
  width: 11px;
  height: 25px;
  margin-left: 3px;
  padding: 0 0 3px;
  border-radius: 0 3px 3px 0;
  background: linear-gradient(#7aa2ec, #3562bb 50%, #0a2f8c);
}

.cap svg {
  width: 8px;
  height: 8px;
}

.combo {
  display: flex;
  flex: none;
  height: 18px;
  margin: 0 1px;
  background: #fff;
}

.combo select {
  flex: 1;
  min-width: 0;
  padding: 0 2px;
  appearance: none;
}

.w-style { width: 83px; }
.w-font { width: 125px; }
.w-size { width: 52px; }
.w-line { width: 132px; }
.w-weight { width: 71px; }

.combo.off {
  height: 20px;
  border: 1px solid #a5a38f;
  background: #ebe7d6;
  color: #8a8978;
}

.combo.off .drop {
  border: 0;
  background: none;
}

.glyph {
  font-family: "Liberation Serif", "Noto Sans CJK SC", serif;
  font-size: 14px;
  font-weight: bold;
}

.boxed,
.shaded {
  width: 15px;
  height: 15px;
  border: 1px solid #39598f;
  line-height: 13px;
  text-align: center;
}

.shaded {
  border: 0;
  background: #b1b1ae;
  line-height: 15px;
}

.fontcolor {
  width: 16px;
  height: 17px;
  border-bottom: 4px solid #f00;
  color: #3058a8;
  line-height: 13px;
  text-align: center;
}

.circled {
  width: 16px;
  height: 16px;
  border: 1px solid #5f7190;
  border-radius: 8px;
  color: #4f6080;
  font-size: 10px;
  font-weight: normal;
  line-height: 14px;
  text-align: center;
}

.script {
  font-family: "Liberation Sans", sans-serif;
}

.script sup,
.script sub {
  color: #3058a8;
  font-size: 7px;
  line-height: 8px;
}

.sum {
  color: #56698f;
  font-weight: normal;
}

.sort {
  gap: 2px;
}

.sort span {
  display: flex;
  flex-direction: column;
}

.sort b {
  font-family: "Liberation Sans", sans-serif;
  font-size: 9px;
  line-height: 8px;
}

.sort svg {
  width: 6px;
}

.blue { color: #3a5fae; }
.red { color: #a83a4a; }

.txt {
  padding: 0 2px 0 4px;
  white-space: nowrap;
}

.symbols .tb {
  font-family: "Liberation Mono", "Noto Sans CJK SC", monospace;
  font-size: 12px;
}

.symbols .cjk {
  font-family: "Noto Sans CJK SC", sans-serif;
}

/* document area */
.work {
  display: flex;
  flex: 1;
  min-height: 0;
  border-top: 2px solid #6f7680;
  border-left: 2px solid #8d9279;
}

.work-main {
  display: flex;
  flex: 1;
  flex-direction: column;
  min-width: 0;
}

.ruler-row {
  display: flex;
  flex: none;
  height: 23px;
  background: #d8e7fc;
}

.corner {
  flex: none;
  width: 23px;
  padding: 3px;
}

.corner button {
  display: flex;
  align-items: center;
  justify-content: center;
  width: 16px;
  height: 16px;
  border: 1px solid #4e64ae;
}

.corner svg {
  width: 8px;
  height: 8px;
}

.ruler-h {
  display: flex;
  flex: 1;
  justify-content: center;
  padding-left: 2px;
}

.ruler-h svg {
  overflow: visible;
}

.tick {
  font-family: "Liberation Sans", sans-serif;
  font-size: 10px;
  text-anchor: middle;
}

.view {
  display: flex;
  flex: 1;
  min-height: 0;
}

.ruler-v {
  flex: none;
  width: 23px;
  overflow: hidden;
  background: #d8e7fc;
}

.canvas {
  display: flex;
  flex: 1;
  justify-content: center;
  padding-left: 2px;
  overflow: hidden;
  background: #9099ae;
}

.page {
  position: relative;
  width: 484px;
  overflow: hidden;
  border-left: 1px solid #000;
  border-right: 3px solid #000;
  background: #fff;
}

.crop {
  position: absolute;
  top: 23px;
  width: 15px;
  height: 15px;
  border-bottom: 1px solid #999;
}

.crop-l {
  left: 58px;
  border-right: 1px solid #999;
}

.crop-r {
  left: 407px;
  border-left: 1px solid #999;
}

.sheet {
  position: absolute;
  width: 524px;
  height: 480px;
  padding-top: 74px;
  color: #8a8a8a;
  font-family: "Liberation Serif", "Noto Sans CJK SC", serif;
  font-size: 8px;
  line-height: 10px;
  transform: translateY(524px) rotate(-90deg);
  transform-origin: top left;
  white-space: nowrap;
}

.note {
  color: #333;
  font-size: 7px;
}

.sheet h2 {
  margin: 17px 0 29px 194px;
  color: #000;
  font-size: 11px;
  line-height: 14px;
}

.fields {
  display: flex;
  height: 10px;
}

.blank {
  height: 9px;
  border-bottom: 1px solid #000;
}

.long { width: 100px; }
.short { width: 57px; }

.proof {
  width: 39px;
  padding-left: 4px;
  color: #333;
}

.f-name { width: 34px; }
.f-no { width: 63px; padding-left: 22px; }
.f-pack { width: 37px; padding-left: 12px; }
.f-unit { padding-left: 23px; }

.bid {
  width: 486px;
  margin-top: 4px;
  border-collapse: collapse;
  table-layout: fixed;
}

.bid td,
.bid th {
  padding: 0;
  border: 1px solid #000;
  overflow: hidden;
}

.bid tr > :first-child {
  border-left: 0;
}

.bid th {
  color: #222;
  font-weight: bold;
  text-align: center;
}

.bid .mid {
  text-align: center;
}

.bid p {
  overflow: hidden;
}

.bid .in { text-indent: 18px; }
.bid .end { text-align: right; }

.head { height: 24px; }
.r13 { height: 13px; }
.r14 { height: 14px; }
.r28 { height: 28px; }

.c18 { width: 18px; }
.c23 { width: 23px; }
.c32 { width: 32px; }
.c34 { width: 34px; }
.c38 { width: 38px; }
.c46 { width: 46px; }
.c48 { width: 48px; }
.c57 { width: 57px; }
.c69 { width: 69px; }
.c74 { width: 74px; }

.sign { margin-top: 41px; }
.f-sign { width: 32px; }
.f-post { width: 38px; padding-left: 13px; }

.seal {
  margin: 12px 0 11px;
  padding-left: 34px;
}

.dark {
  padding-left: 9px;
  color: #333;
}

.mark {
  height: 11px;
  margin-bottom: 2px;
}

.mark mark {
  display: inline-block;
  height: 11px;
  padding-right: 5px;
  background: #ff0;
  color: #77760a;
  font-size: 7px;
}

.wavy {
  text-decoration: underline wavy #080 1px;
}

.caret {
  display: block;
  width: 10px;
  height: 2px;
  margin: 5px 0 0 82px;
  background: #000;
}

/* scroll bars */
.hbar {
  display: flex;
  flex: none;
  align-items: center;
  height: 18px;
  background: #ece9d8;
}

.vw {
  display: flex;
  align-items: center;
  justify-content: center;
  width: 17px;
  height: 17px;
}

.vw svg,
.browse svg {
  shape-rendering: crispEdges;
}

.vw svg {
  width: 12px;
  height: 12px;
}

.vw.on {
  border: 1px solid #000080;
  background: #ffc37c;
}

.sb {
  display: flex;
  flex: none;
  align-items: center;
  justify-content: center;
  width: 17px;
  height: 17px;
  border: 1px solid #fff;
  border-radius: 3px;
  background: linear-gradient(135deg, #dbe6fe, #b4c9f7);
  box-shadow: inset 0 0 0 1px #a9bdec;
}

.sb svg {
  width: 9px;
  height: 9px;
}

.left { transform: rotate(-90deg); }
.rt { transform: rotate(90deg); }
.dn { transform: rotate(180deg); }

.thumb-h {
  display: flex;
  flex: 1;
  align-items: center;
  justify-content: center;
  height: 15px;
  margin: 0 3px 0 2px;
  border: 1px solid #a3bcec;
  border-radius: 2px;
  background: #d3e4fd;
}

.thumb-h span {
  width: 8px;
  height: 6px;
  background: repeating-linear-gradient(90deg, #f4f9ff 0, #f4f9ff 1px, #94b0e4 1px, #94b0e4 2px);
}

.vbar {
  display: flex;
  flex: none;
  flex-direction: column;
  align-items: center;
  width: 19px;
  padding-right: 2px;
  background: #ece9d8;
}

.split {
  width: 17px;
  height: 5px;
  margin-bottom: 1px;
  border-right: 1px solid #000;
  border-bottom: 1px solid #000;
}

.track {
  flex: 1;
  width: 17px;
  padding-top: 21px;
  background: #f8f7f0;
}

.thumb-v {
  display: flex;
  align-items: center;
  justify-content: center;
  height: 78%;
  border: 1px solid #9cb6ea;
  border-radius: 2px;
  background: #c6d8fc;
}

.thumb-v span {
  width: 7px;
  height: 8px;
  background: repeating-linear-gradient(#eef4ff 0, #eef4ff 1px, #8ca9e2 1px, #8ca9e2 2px);
}

.browse {
  display: flex;
  align-items: center;
  justify-content: center;
  width: 17px;
  height: 17px;
}

.browse svg {
  width: 8px;
  height: 8px;
}

.browse:last-child {
  margin-bottom: 18px;
}

/* status bar */
.status {
  display: flex;
  flex: none;
  gap: 4px;
  height: 19px;
  padding: 2px 0 0 157px;
  border-top: 1px solid #fff;
  background: #ece9d8;
}

.cell {
  flex: none;
  padding: 0 3px;
  border: 1px solid #d2cebb;
  border-bottom: 0;
  white-space: nowrap;
}

.s-page { width: 46px; font-size: 11px; }

.s-pos {
  display: flex;
  width: 227px;
  font-size: 11px;
}

.at { width: 141px; }
.ln { width: 51px; }

.mode {
  width: 30px;
  padding: 0 2px;
  color: #aca899;
}

.s-lang { width: 66px; padding: 0 2px; font-size: 11px; }
.s-book { width: 46px; padding: 0 12px; }
.s-a { width: 38px; }
.s-b { width: 28px; }

.s-book svg {
  width: 20px;
  height: 14px;
  shape-rendering: crispEdges;
}

/* floating input method bar */
.ime {
  position: absolute;
  left: 0;
  bottom: 0;
  display: flex;
  gap: 1px;
  width: 157px;
  height: 24px;
  padding: 2px 1px 2px 3px;
  border: 1px solid #fff;
  background: #d4d0c8;
  box-shadow: 1px 0 #666;
}

.ime button {
  display: flex;
  align-items: center;
  justify-content: center;
  width: 19px;
  border: 1px solid;
  border-color: #fff #555 #555 #fff;
  background: #c6c6c4;
  white-space: nowrap;
}

.ime .ime-name {
  width: 72px;
  font-size: 17px;
}

.ime .ime-zh {
  color: #e00000;
  font-size: 16px;
  font-weight: bold;
}

.ime .ime-keys {
  width: 21px;
}

.ime svg {
  width: 14px;
  height: 14px;
}

.ime .ime-keys svg {
  width: 18px;
}
```
